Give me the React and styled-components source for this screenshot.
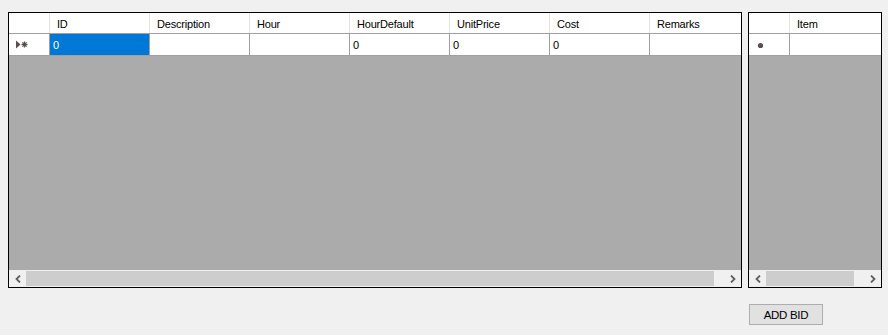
import React from "react";
import styled, { createGlobalStyle } from "styled-components";

const Global = createGlobalStyle`
  html, body { margin: 0; padding: 0; background: #f0f0f0; }
  body { font-family: "Liberation Sans", Arial, sans-serif; }
`;

const Page = styled.div`
  display: flex;
  align-items: flex-start;
  gap: 6px;
  padding: 12px 0 0 8px;
`;

const Column = styled.div`
  display: flex;
  flex-direction: column;
  align-items: flex-start;
`;

const Grid = styled.div`
  box-sizing: border-box;
  width: ${(p) => p.$w}px;
  height: 276px;
  border: 1px solid #000;
  background: #ababab;
  display: flex;
  flex-direction: column;
  overflow: hidden;
`;

const Row = styled.div`
  display: flex;
  flex: none;
  height: ${(p) => p.$h}px;
  box-sizing: border-box;
  border-bottom: 1px solid #a0a0a0;
  background: #fff;
  overflow: hidden;
`;

const Cell = styled.div`
  box-sizing: border-box;
  flex: none;
  width: ${(p) => p.$w}px;
  height: 100%;
  border-right: 1px solid ${(p) => (p.$header ? "#e3e3e3" : "#a0a0a0")};
  display: flex;
  align-items: center;
  padding-left: ${(p) => (p.$header ? 7 : 3)}px;
  padding-top: ${(p) => (p.$header ? 2 : 0)}px;
  font-size: 11px;
  letter-spacing: -0.2px;
  white-space: nowrap;
  color: ${(p) => (p.$selected ? "#fff" : "#000")};
  background: ${(p) => (p.$selected ? "#0078d7" : "#fff")};
`;

const RowHead = styled(Cell)`
  padding-left: 0;
  justify-content: flex-start;
`;

const Fill = styled.div`
  flex: 1;
  background: #ababab;
`;

const ScrollBar = styled.div`
  flex: none;
  height: 17px;
  display: flex;
  align-items: stretch;
  background: #f0f0f0;
`;

const Arrow = styled.div`
  flex: none;
  width: 17px;
  display: flex;
  align-items: center;
  justify-content: center;
`;

const Track = styled.div`
  flex: 1;
  display: flex;
  padding: 1px 0;
`;

const Thumb = styled.div`
  width: ${(p) => p.$w}px;
  background: #cdcdcd;
`;

const Button = styled.button`
  margin: 16px 0 0 1px;
  box-sizing: border-box;
  width: 74px;
  height: 21px;
  border: 1px solid #adadad;
  background: #e1e1e1;
  font-family: "Liberation Sans", Arial, sans-serif;
  font-size: 11.5px;
  letter-spacing: -0.3px;
  color: #000;
  padding: 0;
`;

const Chevron = ({ dir }) => (
  <svg width="6" height="8" viewBox="0 0 6 8">
    <polyline
      points={dir === "left" ? "5,0.5 1.5,4 5,7.5" : "1,0.5 4.5,4 1,7.5"}
      fill="none"
      stroke="#606060"
      strokeWidth="1.8"
    />
  </svg>
);

const CurrentNewRow = () => (
  <svg width="12" height="9" viewBox="0 0 12 9" style={{ marginLeft: 7 }}>
    <polygon points="0,0.5 4.5,4.5 0,8.5" fill="#5c4e4e" />
    <g stroke="#5c4e4e" strokeWidth="1.3">
      <line x1="8.5" y1="1.5" x2="8.5" y2="7.5" />
      <line x1="5.5" y1="4.5" x2="11.5" y2="4.5" />
      <line x1="6.4" y1="2.4" x2="10.6" y2="6.6" />
      <line x1="10.6" y1="2.4" x2="6.4" y2="6.6" />
    </g>
  </svg>
);

const NewRow = () => (
  <svg width="7" height="7" viewBox="0 0 7 7" style={{ marginLeft: 8, marginTop: 2 }}>
    <circle cx="3.5" cy="3.5" r="2.6" fill="#5c4e4e" />
  </svg>
);

const mainCols = ["ID", "Description", "Hour", "HourDefault", "UnitPrice", "Cost", "Remarks"];
const mainVals = ["0", "", "", "0", "0", "0", ""];

export default function App() {
  return (
    <>
      <Global />
      <Page>
        <Column>
          <Grid $w={734}>
            <Row $h={21}>
              <RowHead $w={41} $header />
              {mainCols.map((c) => (
                <Cell key={c} $w={100} $header>
                  {c}
                </Cell>
              ))}
            </Row>
            <Row $h={22}>
              <RowHead $w={41}>
                <CurrentNewRow />
              </RowHead>
              {mainVals.map((v, i) => (
                <Cell key={i} $w={100} $selected={i === 0}>
                  {v}
                </Cell>
              ))}
            </Row>
            <Fill />
            <ScrollBar>
              <Arrow>
                <Chevron dir="left" />
              </Arrow>
              <Track>
                <Thumb $w={688} />
              </Track>
              <Arrow>
                <Chevron dir="right" />
              </Arrow>
            </ScrollBar>
          </Grid>
        </Column>
        <Column>
          <Grid $w={134}>
            <Row $h={21}>
              <RowHead $w={41} $header />
              <Cell $w={100} $header>Item</Cell>
            </Row>
            <Row $h={22}>
              <RowHead $w={41}>
                <NewRow />
              </RowHead>
              <Cell $w={100} />
            </Row>
            <Fill />
            <ScrollBar>
              <Arrow>
                <Chevron dir="left" />
              </Arrow>
              <Track>
                <Thumb $w={88} />
              </Track>
              <Arrow>
                <Chevron dir="right" />
              </Arrow>
            </ScrollBar>
          </Grid>
          <Button>ADD BID</Button>
        </Column>
      </Page>
    </>
  );
}
